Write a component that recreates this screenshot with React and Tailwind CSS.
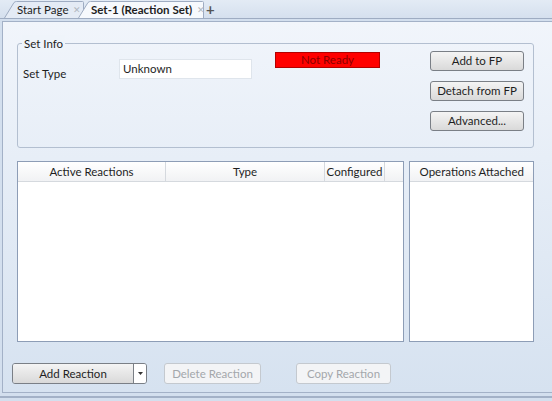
import React from 'react'

const font = { fontFamily: 'Lato, "Open Sans", "Liberation Sans", sans-serif' }

function Tab({ label, active, width }) {
  return (
    <div className={`relative h-[17px] flex items-center whitespace-nowrap ${active ? '-ml-[6px] z-10' : ''}`} style={{ width }}>
      <svg className="absolute inset-0" width={width} height="17" viewBox={`0 0 ${width} 17`}>
        <path
          d={`M0.5 17 L10 1.5 Q11 0.5 12.5 0.5 L${width - 1.5} 0.5 Q${width - 0.5} 0.5 ${width - 0.5} 1.5 L${width - 0.5} 17`}
          fill={active ? '#f6f9fd' : '#e4ebf5'}
          stroke="#9eacc2"
        />
      </svg>
      <span className={`relative pl-[13px] text-[11.5px] text-[#1e1e1e] ${active ? 'font-bold' : ''}`}>{label}</span>
      <span className="relative ml-[5px] text-[9px] text-[#b0b7c0]">✕</span>
    </div>
  )
}

function Btn({ children, className = '', disabled }) {
  return (
    <div
      className={`flex items-center justify-center h-[20px] rounded-[3px] border text-[11.5px] ${
        disabled
          ? 'border-[#c4c9cf] bg-[#f3f4f6] text-[#a3a7ab]'
          : 'border-[#7a7f86] bg-gradient-to-b from-[#f4f4f4] to-[#d9d9d9] text-[#1e1e1e]'
      } ${className}`}
    >
      {children}
    </div>
  )
}

export default function App() {
  return (
    <div className="w-[552px] h-[401px] overflow-hidden bg-[#d3dfee]" style={font}>
      {/* Tab strip */}
      <div className="h-[19px] flex items-end pl-[4px] bg-gradient-to-b from-[#e3ebf5] to-[#d5e0ee] border-b border-[#9eacc2]">
        <Tab label="Start Page" width={80} />
        <Tab label="Set-1 (Reaction Set)" active width={126} />
        <div className="ml-[2px] h-[17px] flex items-center text-[15px] leading-none text-[#555] font-bold">+</div>
      </div>

      {/* Document panel */}
      <div className="mt-[2px] ml-[2px] h-[372px] border-l border-t border-b border-[#a3b1c7] bg-gradient-to-b from-[#f1f5fb] to-[#d6e2f0] pt-[21px] pl-[14px] pr-[18px]">
        {/* Set Info group */}
        <div className="relative h-[105px] border border-[#b3bfd0] rounded-[3px] flex">
          <span className="absolute -top-[9px] left-[4px] px-[2px] text-[11.5px] text-[#1e1e1e] bg-[#eff4fa]">Set Info</span>
          <div className="flex items-start pt-[15px]">
            <span className="ml-[5px] mt-[6px] w-[96px] text-[11.5px] text-[#1e1e1e]">Set Type</span>
            <div className="w-[133px] h-[20px] bg-white border border-[#dfe5ec] text-[11.5px] text-[#1e1e1e] pl-[3px] flex items-center">
              Unknown
            </div>
            <div className="ml-[23px] -mt-[7px] w-[105px] h-[16px] bg-[#ff0000] border border-[#b20000] text-[11.5px] text-[#8b0000] flex items-center justify-center">
              Not Ready
            </div>
          </div>
          <div className="ml-auto mr-[9px] pt-[7px] flex flex-col gap-[10px]">
            <Btn className="w-[94px]">Add to FP</Btn>
            <Btn className="w-[94px]">Detach from FP</Btn>
            <Btn className="w-[94px]">Advanced...</Btn>
          </div>
        </div>

        {/* Tables */}
        <div className="mt-[13px] flex gap-[5px]">
          <div className="w-[389px] h-[181px] bg-white border border-[#8d9db6]">
            <div className="flex h-[20px] border-b border-[#d5d9de] bg-gradient-to-b from-white to-[#f1f2f4] text-[11.5px] text-[#1e1e1e]">
              <div className="w-[148px] border-r border-[#d5d9de] flex items-center justify-center">Active Reactions</div>
              <div className="w-[159px] border-r border-[#d5d9de] flex items-center justify-center">Type</div>
              <div className="w-[60px] border-r border-[#d5d9de] flex items-center justify-center">Configured</div>
              <div className="flex-1" />
            </div>
          </div>
          <div className="w-[125px] h-[181px] bg-white border border-[#8d9db6]">
            <div className="h-[20px] border-b border-[#d5d9de] bg-gradient-to-b from-white to-[#f1f2f4] text-[11.5px] text-[#1e1e1e] flex items-center justify-center">
              Operations Attached
            </div>
          </div>
        </div>

        {/* Bottom buttons */}
        <div className="mt-[21px] -ml-[5px] flex items-center">
          <div className="flex h-[21px] w-[135px] rounded-[3px] border border-[#7a7f86] overflow-hidden">
            <div className="flex-1 flex items-center justify-center bg-gradient-to-b from-[#f4f4f4] to-[#d9d9d9] border-r border-[#7a7f86] text-[11.5px] text-[#1e1e1e]">
              Add Reaction
            </div>
            <div className="w-[12px] bg-white flex items-center justify-center">
              <svg width="5" height="3" viewBox="0 0 5 3"><path d="M0 0 L5 0 L2.5 3 Z" fill="#333" /></svg>
            </div>
          </div>
          <Btn disabled className="ml-[17px] w-[97px] h-[21px]">Delete Reaction</Btn>
          <Btn disabled className="ml-[35px] w-[95px] h-[21px]">Copy Reaction</Btn>
        </div>
      </div>
      <div className="mt-[3px] h-[2px] bg-[#a3b1c7]" />
    </div>
  )
}
